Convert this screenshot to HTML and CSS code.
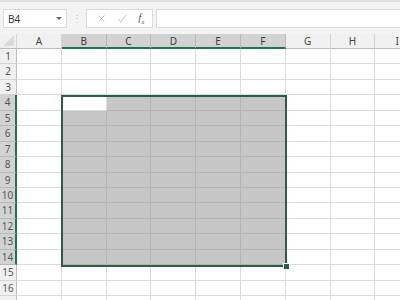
FILE: index.html
```html
<!DOCTYPE html>
<html>
<head lang="en">
    <meta charset="UTF-8">
    <title>Sheet1</title>
    <link rel="stylesheet" href="styles.css">
</head>
<body>
<div class="toolbar">
    <div class="namebox">
        <span>B4</span>
        <svg class="caret" width="6" height="4" viewBox="0 0 6 4"><path d="M0 0h6L3 3z" fill="#666"/></svg>
    </div>
    <div class="grip">&#8942;</div>
    <div class="fxbox">
        <svg width="9" height="9" viewBox="0 0 9 9"><path d="M1.5 1.5l6 6M7.5 1.5l-6 6" stroke="#c4c4c4" stroke-width="1"/></svg>
        <svg width="10" height="9" viewBox="0 0 10 9"><path d="M1 5l3 3 5-7" stroke="#c4c4c4" stroke-width="1" fill="none"/></svg>
        <span class="fx">f<sub>x</sub></span>
    </div>
    <div class="formula"></div>
</div>
<div class="sheet" id="sheet">
    <div class="range"><div class="handle"></div></div>
</div>
<script>
    // build headers and cells
    var sheet = document.getElementById('sheet');
    var cols = ['A','B','C','D','E','F','G','H','I'];
    var corner = document.createElement('div');
    corner.className = 'corner';
    sheet.appendChild(corner);
    cols.forEach(function (c, i) {
        var h = document.createElement('div');
        h.className = 'colhead' + (i >= 1 && i <= 5 ? ' sel' : '');
        h.textContent = c;
        sheet.appendChild(h);
    });
    for (var r = 1; r <= 17; r++) {
        var rh = document.createElement('div');
        rh.className = 'rowhead' + (r >= 4 && r <= 14 ? ' sel' : '');
        // last row only peeks in at the bottom edge
        rh.textContent = r < 17 ? r : '';
        sheet.appendChild(rh);
        for (var c = 0; c < cols.length; c++) {
            var cell = document.createElement('div');
            var inRange = r >= 4 && r <= 14 && c >= 1 && c <= 5;
            cell.className = 'cell' + (inRange && !(r === 4 && c === 1) ? ' fill' : '');
            sheet.appendChild(cell);
        }
    }
</script>
</body>
</html>
```

FILE: styles.css
```css
* {
    margin: 0;
    padding: 0;
    box-sizing: border-box;
}
body {
    width: 400px;
    height: 300px;
    overflow: hidden;
    background: #fff;
    font-family: "Noto Sans", "Liberation Sans", sans-serif;
    font-size: 10px;
    color: #444;
}
.toolbar {
    height: 34px;
    background: #f3f3f3;
    border-top: 2px solid #dcdcdc;
    display: flex;
    align-items: flex-start;
    padding: 7px 0 0 3px;
}
.namebox {
    width: 64px;
    height: 19px;
    background: #fff;
    border: 1px solid #dadada;
    display: flex;
    align-items: center;
    justify-content: space-between;
    padding: 0 4px 0 4px;
    color: #333;
    font-size: 10px;
}
.caret {
    margin-top: 1px;
}
.grip {
    width: 19px;
    text-align: center;
    color: #c0c0c0;
    line-height: 19px;
    font-size: 10px;
}
.fxbox {
    width: 67px;
    height: 19px;
    background: #fff;
    border: 1px solid #dadada;
    display: flex;
    align-items: center;
    justify-content: space-around;
    padding: 0 2px 0 4px;
}
.fx {
    font-family: "Liberation Serif", serif;
    font-style: italic;
    font-size: 11px;
    color: #555;
}
.fx sub {
    font-size: 7px;
}
.formula {
    flex: 1;
    height: 19px;
    margin-left: 3px;
    background: #fff;
    border: 1px solid #dadada;
    border-right: none;
}
.sheet {
    position: relative;
    display: grid;
    grid-template-columns: 17px repeat(9, 44.8px);
    grid-template-rows: 15px repeat(17, 15.45px);
}
.corner {
    background: #f0f0f0;
    border-right: 1px solid #d4d4d4;
    border-bottom: 1px solid #bdbdbd;
    position: relative;
}
.corner::after {
    content: "";
    position: absolute;
    right: 2px;
    bottom: 2px;
    border-left: 11px solid transparent;
    border-bottom: 11px solid #dadada;
}
.colhead {
    background: #f0f0f0;
    border-right: 1px solid #d4d4d4;
    border-bottom: 1px solid #bdbdbd;
    text-align: center;
    line-height: 14px;
    color: #444;
}
.colhead.sel {
    background: #d2d2d2;
    border-right-color: #b8b8b8;
    border-bottom: 2px solid #217346;
    color: #3a3a3a;
}
.rowhead {
    background: #f0f0f0;
    border-right: 1px solid #bdbdbd;
    border-bottom: 1px solid #d4d4d4;
    text-align: center;
    line-height: 15px;
    color: #555;
}
.rowhead.sel {
    background: #d2d2d2;
    border-right: 2px solid #217346;
    border-bottom-color: #b8b8b8;
}
.cell {
    border-right: 1px solid #dadada;
    border-bottom: 1px solid #dadada;
}
.cell.fill {
    background: #c6c6c6;
    border-color: #b4b4b4;
}
/* selection outline B4:F14, drawn over the cells */
.range {
    position: absolute;
    left: 61px;
    top: 60.5px;
    width: 226px;
    height: 172px;
    border: 2px solid #2b5f45;
}
.handle {
    position: absolute;
    right: -5px;
    bottom: -5px;
    width: 7px;
    height: 7px;
    background: #2b5f45;
    border: 1px solid #fff;
}
```
